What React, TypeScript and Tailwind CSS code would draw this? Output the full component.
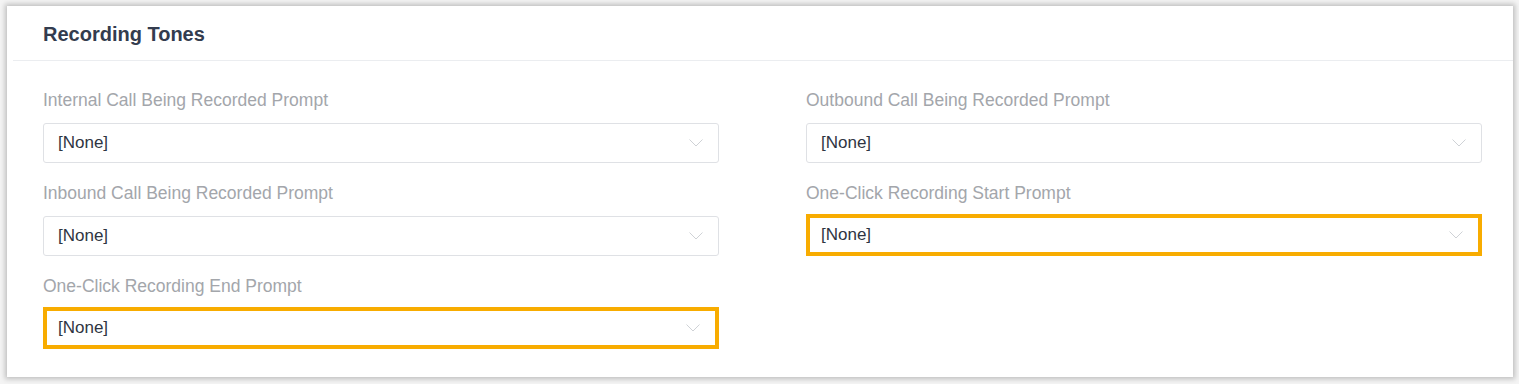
import React from "react";

function Chevron() {
  return (
    <svg width="14" height="8" viewBox="0 0 14 8" className="shrink-0">
      <path d="M0.5 0.5 L7 7 L13.5 0.5" fill="none" stroke="#cfd2d6" strokeWidth="1" />
    </svg>
  );
}

function Field({ label, highlight = false }: { label: string; highlight?: boolean }) {
  return (
    <div className="flex flex-col">
      <div className="h-[23px] mb-[11px] text-[17.5px] leading-[23px] text-[#a3a6ab] whitespace-nowrap">{label}</div>
      {highlight ? (
        <div className="mt-[-2px] h-[42px] border-[4px] border-[#f8ac00] flex items-center pl-[11px] pr-[15px] justify-between">
          <span className="text-[17px] text-[#2f3542]">[None]</span>
          <Chevron />
        </div>
      ) : (
        <div className="h-[40px] border border-[#dfe1e5] rounded-[3px] flex items-center pl-[14px] pr-[15px] justify-between">
          <span className="text-[17px] text-[#2f3542]">[None]</span>
          <Chevron />
        </div>
      )}
    </div>
  );
}

export default function App() {
  return (
    <div
      className="w-[1519px] h-[384px] bg-[#f4f4f4] pt-[6px] pl-[7px]"
      style={{ fontFamily: '"Liberation Sans", Arial, sans-serif' }}
    >
      <div className="w-[1506px] h-[371px] bg-white shadow-[0_0_5px_2px_rgba(0,0,0,0.22)]">
        <div className="h-[54px] pl-[36px] pt-[16px] text-[20px] font-bold text-[#333c4e] leading-[24px]">
          Recording Tones
        </div>
        <div className="ml-[6px] h-px bg-[#ebedf0]" />
        <div className="pl-[36px] pr-[31px] pt-[28px] grid grid-cols-2 gap-x-[87px] gap-y-[19px]">
          <Field label="Internal Call Being Recorded Prompt" />
          <Field label="Outbound Call Being Recorded Prompt" />
          <Field label="Inbound Call Being Recorded Prompt" />
          <Field label="One-Click Recording Start Prompt" highlight />
          <Field label="One-Click Recording End Prompt" highlight />
        </div>
      </div>
    </div>
  );
}
